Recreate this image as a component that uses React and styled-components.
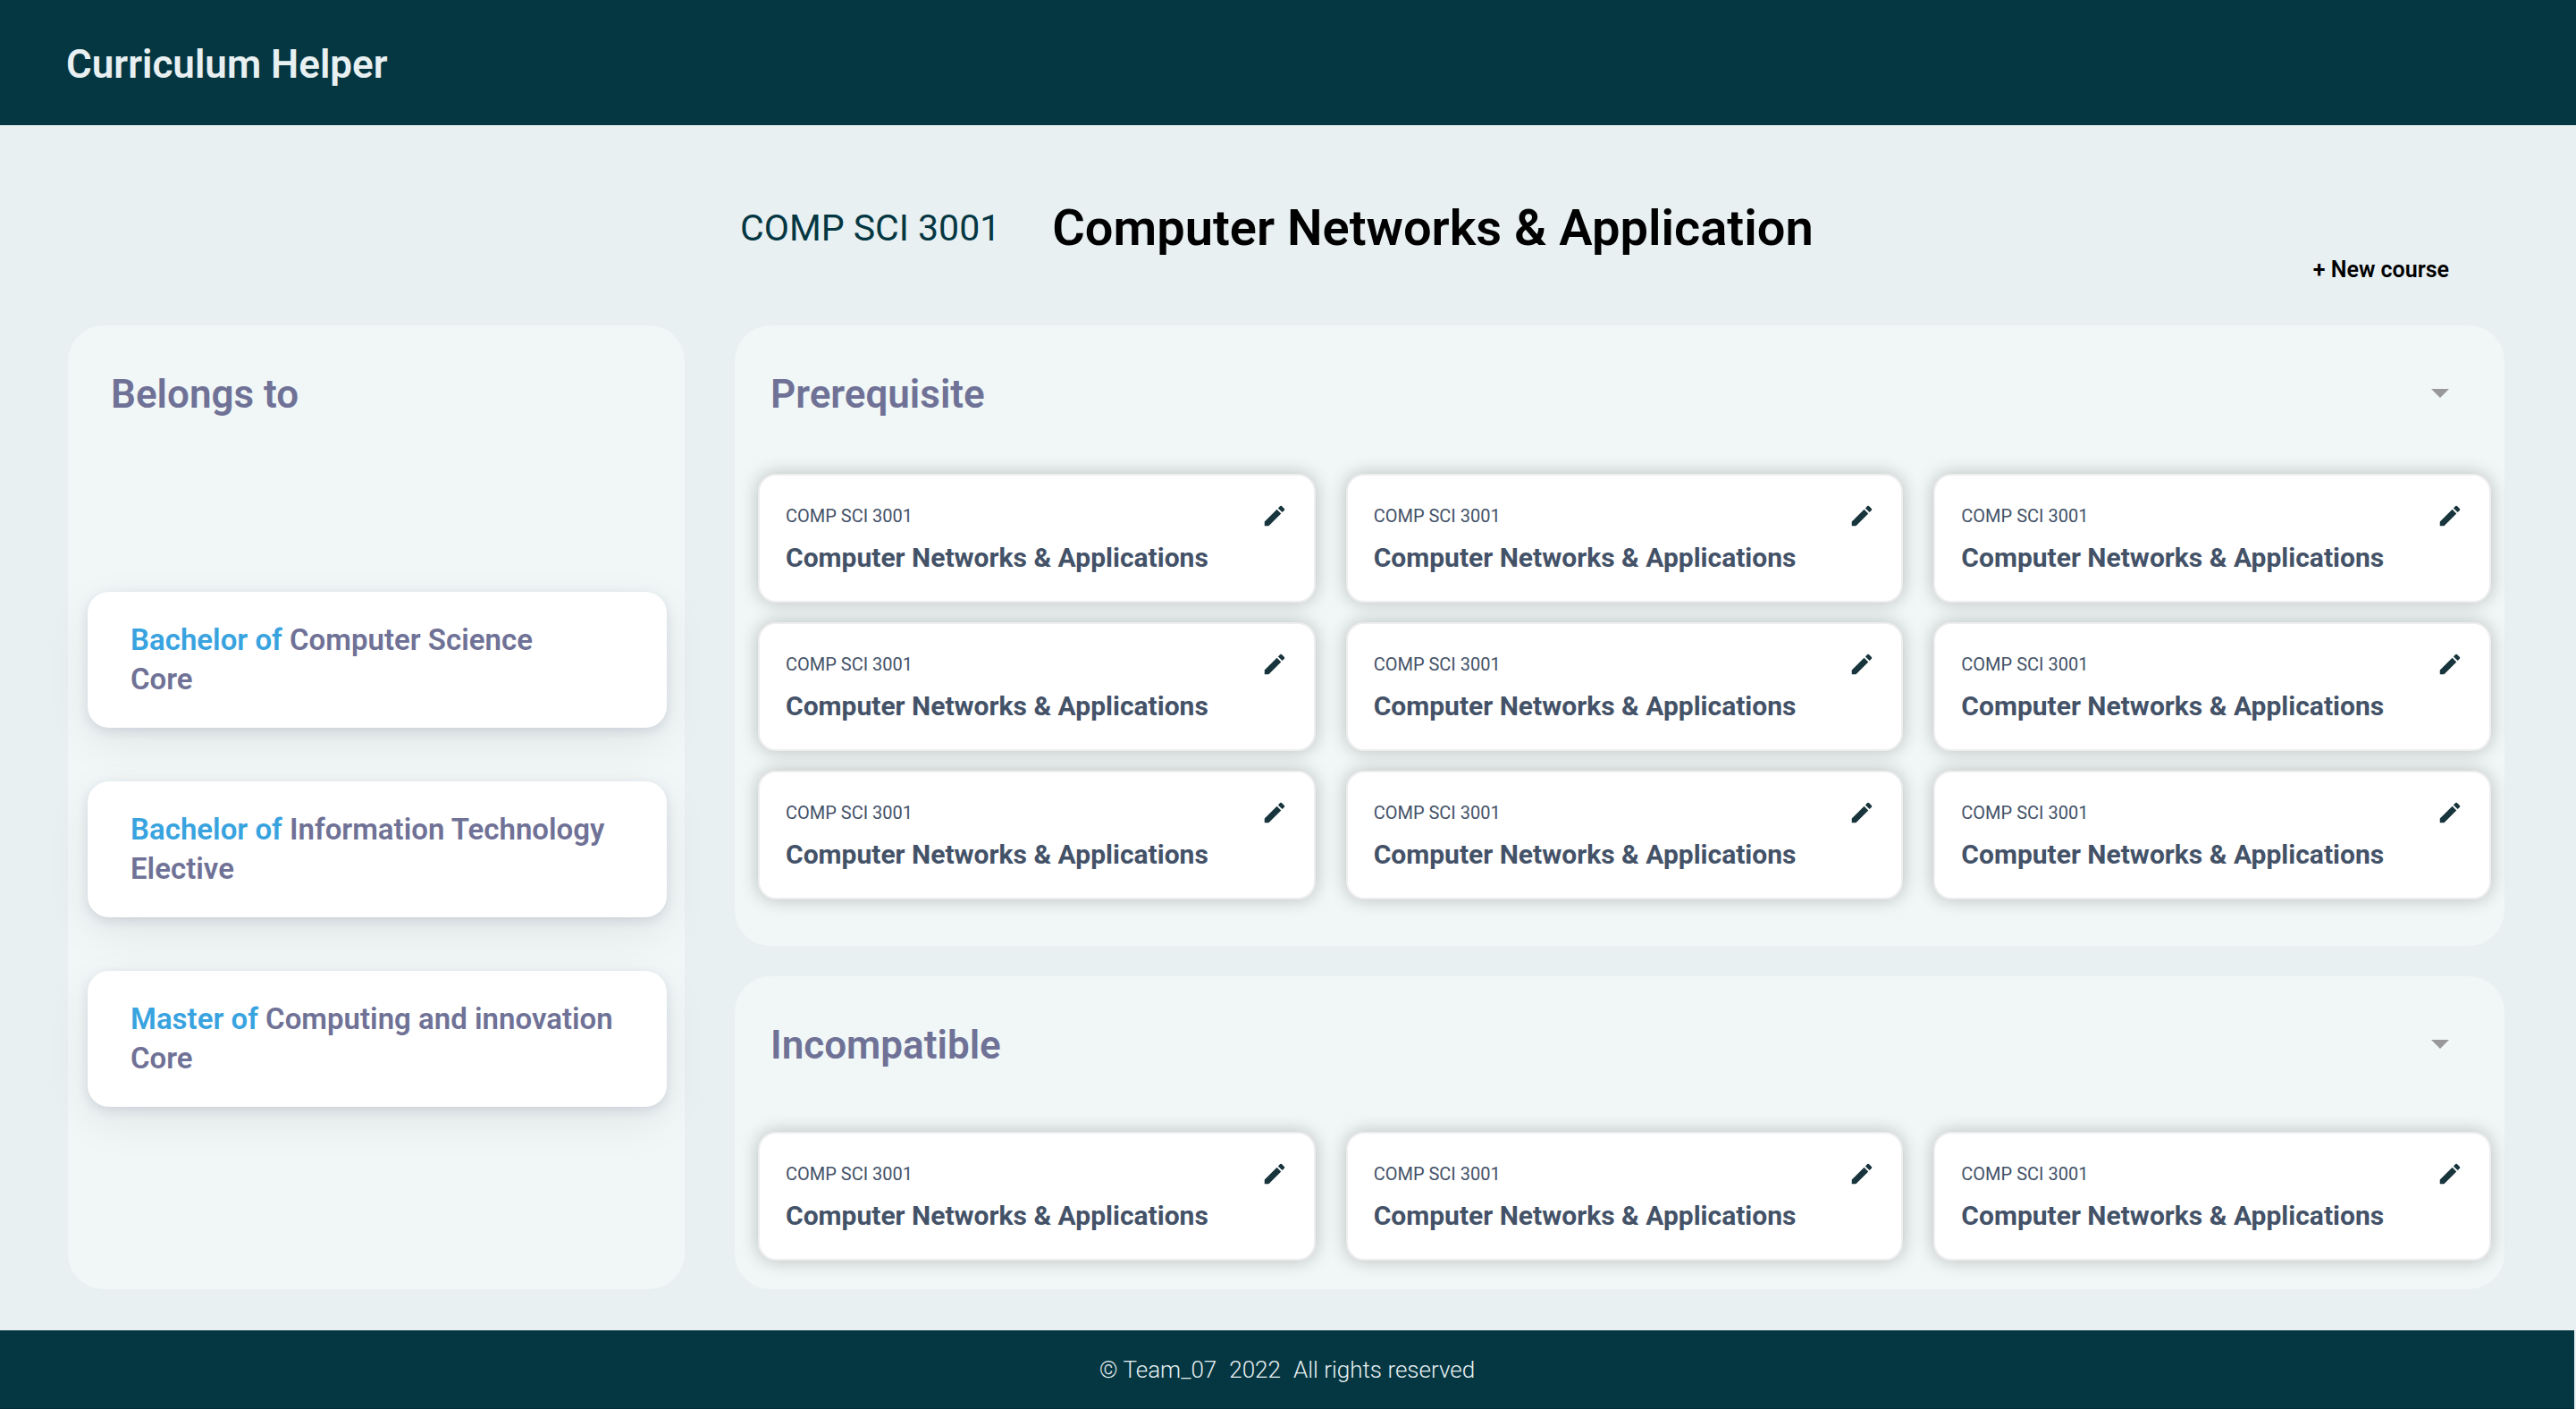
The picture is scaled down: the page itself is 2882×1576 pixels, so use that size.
import React, { useState } from "react";
import styled, { createGlobalStyle } from "styled-components";

const GlobalStyle = createGlobalStyle`
  *, *::before, *::after { box-sizing: border-box; }
  body {
    margin: 0;
    background: #e8f0f2;
    color: #000;
    font-family: Roboto, "Open Sans", sans-serif;
  }
  h1, h2, h3, p, ul { margin: 0; padding: 0; font-weight: inherit; }
  ul { list-style: none; }
  button { margin: 0; padding: 0; border: 0; background: none; font: inherit; cursor: pointer; }
`;

const Page = styled.div`
  display: flex;
  flex-direction: column;
  min-height: 100vh;
`;

const Header = styled.header`
  padding: 44px 74px 40px;
  background: #053742;
`;

const Brand = styled.p`
  color: #e8f0f2;
  font-size: 44px;
  font-weight: 600;
  line-height: 56px;
`;

const Main = styled.main`
  flex: 1;
  display: grid;
  grid-template-columns: minmax(0, 690fr) minmax(0, 1980fr);
  grid-template-rows: auto 1fr;
  column-gap: 56px;
  padding: 84px 80px 46px 76px;
`;

const Hero = styled.div`
  grid-column: 2;
  display: flex;
  flex-direction: column;
  padding: 0 62px 46px 6px;
`;

const HeroTitle = styled.div`
  display: flex;
  align-items: center;
  gap: 58px;
  line-height: 62px;
`;

const HeroCode = styled.p`
  color: #053742;
  font-size: 41px;
`;

const HeroName = styled.h1`
  font-size: 56px;
  font-weight: 600;
`;

const NewCourse = styled.button`
  align-self: flex-end;
  color: #000;
  font-size: 25px;
  font-weight: 600;
  line-height: 32px;
`;

const Panel = styled.section`
  padding-top: 49px;
  border-radius: 40px;
  background: #f1f7f7;
`;

const PanelHeader = styled.div`
  display: flex;
  align-items: center;
  justify-content: space-between;
  height: 56px;
  padding: 0 48px 0 ${(p) => p.$indent}px;
`;

const PanelTitle = styled.h2`
  color: #6f7296;
  font-size: 44px;
  font-weight: 600;
  line-height: 56px;
`;

const ToggleButton = styled.button`
  display: flex;
  color: #999;
`;

const DegreeList = styled.ul`
  display: flex;
  flex-direction: column;
  gap: 60px;
  padding: 193px 20px 40px 22px;
`;

const DegreeCard = styled.li`
  padding: 32px 48px;
  border-radius: 24px;
  background: #fff;
  box-shadow: 0 4px 12px rgba(111, 114, 150, 0.2), 0 16px 50px rgba(0, 0, 0, 0.07);
  color: #6f7296;
  font-size: 33px;
  font-weight: 600;
  line-height: 44px;
`;

const DegreeLevel = styled.span`
  color: #38a3df;
`;

const Relations = styled.div`
  display: flex;
  flex-direction: column;
  gap: 34px;
`;

const CourseGrid = styled.ul`
  display: grid;
  grid-template-columns: repeat(3, minmax(0, 1fr));
  gap: 22px 34px;
  padding: ${(p) => (p.$compact ? "69px 15px 32px 26px" : "61px 15px 52px 26px")};
`;

const CourseCard = styled.li`
  display: flex;
  flex-direction: column;
  gap: 14px;
  padding: 30px 29px;
  border: 2px solid #eee;
  border-radius: 20px;
  background: #fff;
  box-shadow: 0 0 20px rgba(0, 0, 0, 0.24);
  color: #445268;
`;

const CourseTop = styled.div`
  display: flex;
  align-items: center;
  justify-content: space-between;
`;

const CourseCode = styled.p`
  font-size: 20px;
  line-height: 30px;
`;

const CourseName = styled.h3`
  font-size: 30px;
  font-weight: 700;
  line-height: 36px;
`;

const EditButton = styled.button`
  display: flex;
  color: #18343c;
`;

const Footer = styled.footer`
  display: flex;
  align-items: center;
  justify-content: center;
  gap: 14px;
  height: 88px;
  margin-right: 2px;
  border-bottom: 1px solid #032d38;
  background: #053742;
  color: #e8f0f2;
  font-size: 26px;
  font-weight: 300;
`;

const PencilIcon = () => (
  <svg width="30" height="30" viewBox="0 0 24 24" fill="currentColor" aria-hidden="true">
    <path d="M3 17.25V21h3.75L17.81 9.94l-3.75-3.75L3 17.25zM20.71 7.04a1 1 0 0 0 0-1.41l-2.34-2.34a1 1 0 0 0-1.41 0l-1.83 1.83 3.75 3.75 1.83-1.83z" />
  </svg>
);

const ArrowIcon = () => (
  <svg width="48" height="48" viewBox="0 0 24 24" fill="currentColor" aria-hidden="true">
    <path d="M7 9l5 5 5-5z" />
  </svg>
);

const degrees = [
  { level: "Bachelor of", name: "Computer Science", kind: "Core" },
  { level: "Bachelor of", name: "Information Technology", kind: "Elective" },
  { level: "Master of", name: "Computing and innovation", kind: "Core" },
];

const makeCourses = (count) =>
  Array.from({ length: count }, (_, id) => ({
    id,
    code: "COMP SCI 3001",
    name: "Computer Networks & Applications",
  }));

function Course({ code, name }) {
  return (
    <CourseCard>
      <CourseTop>
        <CourseCode>{code}</CourseCode>
        <EditButton type="button" aria-label="Edit course">
          <PencilIcon />
        </EditButton>
      </CourseTop>
      <CourseName>{name}</CourseName>
    </CourseCard>
  );
}

function CoursePanel({ title, courses, compact }) {
  const [open, setOpen] = useState(true);
  return (
    <Panel>
      <PanelHeader $indent={40}>
        <PanelTitle>{title}</PanelTitle>
        <ToggleButton
          type="button"
          aria-label={`Toggle ${title}`}
          aria-expanded={open}
          onClick={() => setOpen(!open)}
        >
          <ArrowIcon />
        </ToggleButton>
      </PanelHeader>
      {open && (
        <CourseGrid $compact={compact}>
          {courses.map((c) => (
            <Course key={c.id} code={c.code} name={c.name} />
          ))}
        </CourseGrid>
      )}
    </Panel>
  );
}

export default function App() {
  return (
    <>
      <GlobalStyle />
      <Page>
        <Header>
          <Brand>Curriculum Helper</Brand>
        </Header>
        <Main>
          <Hero>
            <HeroTitle>
              <HeroCode>COMP SCI 3001</HeroCode>
              <HeroName>Computer Networks & Application</HeroName>
            </HeroTitle>
            <NewCourse type="button">+ New course</NewCourse>
          </Hero>
          <Panel>
            <PanelHeader $indent={48}>
              <PanelTitle>Belongs to</PanelTitle>
            </PanelHeader>
            <DegreeList>
              {degrees.map((d) => (
                <DegreeCard key={d.name}>
                  <p>
                    <DegreeLevel>{d.level}</DegreeLevel> {d.name}
                  </p>
                  <p>{d.kind}</p>
                </DegreeCard>
              ))}
            </DegreeList>
          </Panel>
          <Relations>
            <CoursePanel title="Prerequisite" courses={makeCourses(9)} />
            <CoursePanel title="Incompatible" courses={makeCourses(3)} compact />
          </Relations>
        </Main>
        <Footer>
          <span>© Team_07</span>
          <span>2022</span>
          <span>All rights reserved</span>
        </Footer>
      </Page>
    </>
  );
}
